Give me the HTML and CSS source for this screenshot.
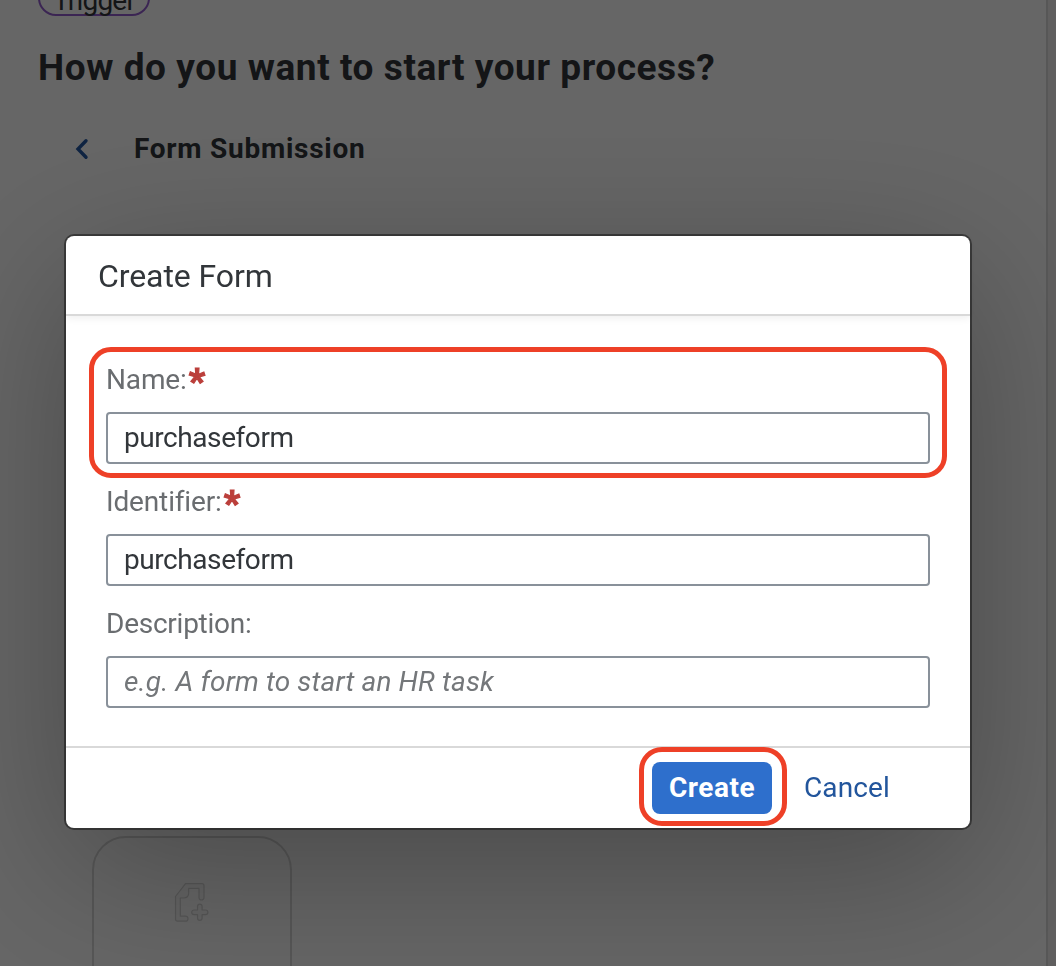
FILE: index.html
```html
<!DOCTYPE html>
<html lang="en">
<head>
<meta charset="utf-8">
<title>Create Form</title>
<link rel="stylesheet" href="styles.css">
</head>
<body>
<div class="app">
  <main class="page">
    <span class="tag">Trigger</span>
    <h1 class="page-title">How do you want to start your process?</h1>
    <div class="subheader">
      <svg class="back" viewBox="0 0 16 22" width="16" height="22"><path d="M12 2.700 4 11l8 8.300" fill="none" stroke="#2458a4" stroke-width="3.4" stroke-linecap="round" stroke-linejoin="miter"/></svg>
      <h2 class="subtitle">Form Submission</h2>
    </div>
    <div class="card">
      <svg class="card-icon" viewBox="0 0 38 42" width="38" height="42">
        <g fill="#f8f8f8" stroke="#d6d6d6" stroke-width="1.2" stroke-linejoin="round">
          <path d="M4.500 40.200Q2.500 40.200 2.500 38.200V15.500L12.500 2.700H29Q31 2.700 31 4.700V16.500a2.500 2.500 0 0 1-5 0V7.400H15.700V12Q15.700 17 10.500 17H7.300V35.200H12.500a2.500 2.500 0 0 1 0 5Z"/>
          <path d="M24.500 29V25.500a2.300 2.300 0 0 1 4.600 0V29h3.500a2.300 2.300 0 0 1 0 4.600H29.100v3.500a2.300 2.300 0 0 1-4.600 0V33.600H21a2.300 2.300 0 0 1 0-4.600Z"/>
        </g>
      </svg>
    </div>
  </main>
  <aside class="rail"></aside>
</div>
<div class="overlay">
  <section class="dialog" role="dialog" aria-label="Create Form">
    <header class="dialog-header"><span class="dialog-title">Create Form</span></header>
    <form class="dialog-body">
      <div class="field marked">
        <label class="label" for="name"><span class="t-name">Name:</span><span class="star">*</span></label>
        <input class="input" id="name" value="purchaseform">
      </div>
      <div class="field">
        <label class="label" for="ident"><span class="t-ident">Identifier:</span><span class="star">*</span></label>
        <input class="input" id="ident" value="purchaseform">
      </div>
      <div class="field">
        <label class="label" for="desc"><span class="t-desc">Description:</span></label>
        <input class="input" id="desc" placeholder="e.g. A form to start an HR task">
      </div>
    </form>
    <footer class="dialog-footer">
      <button class="button primary">Create</button>
      <button class="button ghost">Cancel</button>
    </footer>
  </section>
</div>
</body>
</html>
```
FILE: styles.css
```css
* { box-sizing: border-box; }
body { margin: 0; height: 966px; overflow: hidden; font-family: Roboto, "Liberation Sans", sans-serif; color: #32363a; background: #fff; }
.app { display: flex; height: 966px; }
.page { flex: 1; overflow: hidden; display: flex; flex-direction: column; align-items: flex-start; padding-left: 38px; }
.rail { width: 10px; background: #efeeed; border-left: 2px solid #dadada; }
.tag { width: 112px; height: 42px; margin-top: -26px; border: 2px solid #945ecf; border-radius: 18px; font-size: 28px; line-height: 49px; letter-spacing: -0.8px; text-align: center; flex: none; }
.page-title { margin: 30px 0 0; font-size: 37px; line-height: 44px; font-weight: 700; white-space: nowrap; letter-spacing: 0.57px; }
.subheader { display: flex; align-items: center; height: 40px; margin: 42px 0 0 36px; }
.subtitle { margin: 0 0 0 44px; font-size: 28px; font-weight: 700; white-space: nowrap; letter-spacing: 0.74px; }
.card { width: 200px; height: 200px; flex: none; margin: 671px 0 0 54px; border: 2px solid #d8d8d8; border-radius: 34px; padding: 43px 0 0 79px; }
.overlay { position: fixed; inset: 0; background: rgba(0, 0, 0, 0.6); padding: 236px 0 0 66px; }
.dialog { width: 904px; height: 592px; display: flex; flex-direction: column; background: #fff; border-radius: 8px; box-shadow: 0 0 0 2px rgba(0, 0, 0, 0.42), 0 40px 160px rgba(0, 0, 0, 0.3); }
.dialog-header { height: 80px; display: flex; align-items: center; padding: 2px 0 0 32px; border-bottom: 2px solid #d9d9d9; box-shadow: 0 2px 8px rgba(0, 0, 0, 0.07); }
.dialog-title { font-size: 32px; letter-spacing: -0.08px; }
.dialog-body { flex: 1; display: flex; flex-direction: column; gap: 12px; padding: 38px 40px 0; }
.field { position: relative; display: flex; flex-direction: column; gap: 8px; }
.label { display: flex; height: 50px; line-height: 52px; font-size: 28px; color: #6a6d70; letter-spacing: -0.15px; }
.t-desc { letter-spacing: -0.25px; }
.star { margin-left: 2px; color: #bb3f3b; font-weight: 900; font-size: 35px; line-height: 56px; -webkit-text-stroke: 1.2px #bb3f3b; }
.input { width: 100%; height: 52px; border: 2px solid #89919a; border-radius: 4px; padding: 0 16px 2px; font: 28px Roboto, "Liberation Sans", sans-serif; letter-spacing: -0.43px; color: #32363a; background: #fff; outline: none; }
.input::placeholder { color: #74777a; opacity: 1; font-style: italic; letter-spacing: 0.14px; }
.marked::after, .primary::after { content: ""; position: absolute; border: 5px solid #ee4027; pointer-events: none; }
.marked::after { inset: -7px -17px -14px; border-radius: 22px; }
.dialog-footer { height: 82px; display: flex; align-items: center; justify-content: flex-end; padding-right: 64px; gap: 16px; border-top: 2px solid #d9d9d9; }
.button { height: 52px; border: 0; border-radius: 8px; padding: 0 0 2px; font: 28px Roboto, "Liberation Sans", sans-serif; background: none; }
.primary { position: relative; width: 120px; background: #2e6fcc; color: #fff; font-weight: 700; letter-spacing: 0.5px; }
.primary::after { inset: -15px -15px -12px -13px; border-radius: 23px; }
.ghost { width: 118px; color: #22559c; letter-spacing: 0.15px; }
```
